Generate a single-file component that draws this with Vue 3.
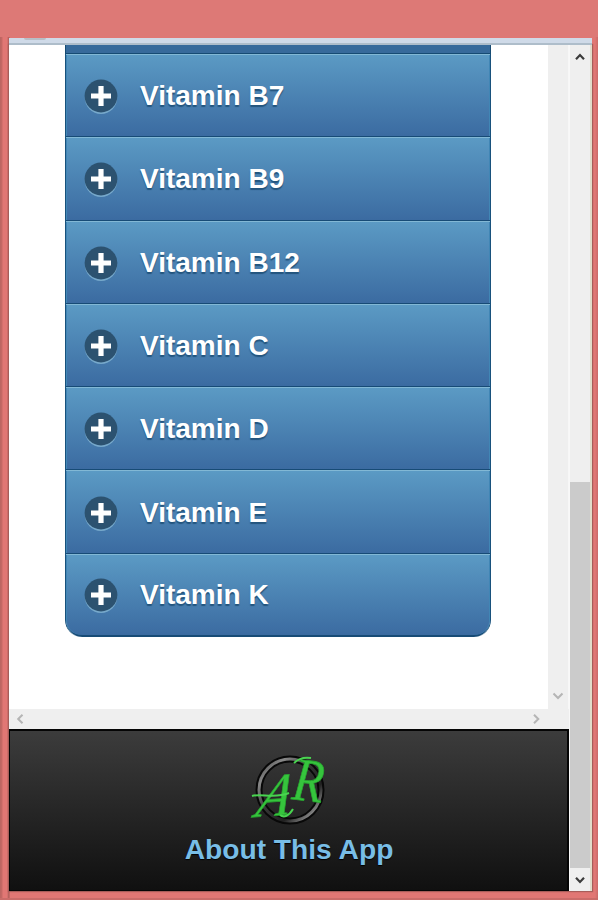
<template>
  <div class="frame">
    <div class="toolbar"><span class="toolbar-button"></span></div>
    <div class="window">
      <div class="page">
        <div class="viewport">
          <main class="content">
            <div class="previous-row"></div>
            <div class="vitamin-list">
              <div v-for="vitamin in vitamins" :key="vitamin" class="vitamin">
                <svg class="plus" viewBox="0 0 36 38">
                  <circle cx="18" cy="20.8" r="16.2" fill="#77a9cb" />
                  <circle cx="18" cy="19" r="16.4" fill="#2c5270" />
                  <path d="M18 9v20M8 19h20" stroke="#fff" stroke-width="5.2" />
                </svg>
                <span>{{ vitamin }}</span>
              </div>
            </div>
          </main>
          <div class="inner-vertical">
            <svg class="arrow muted" viewBox="0 0 12 10"><path d="M1.5 2.5 6 7l4.5-4.5" /></svg>
          </div>
        </div>
        <div class="inner-horizontal">
          <svg class="arrow muted" viewBox="0 0 12 10"><path d="M9.5.7 5.2 5l4.3 4.3" /></svg>
          <svg class="arrow muted" viewBox="0 0 12 10"><path d="M3 .7 7.3 5 3 9.3" /></svg>
        </div>
        <footer class="footer">
          <svg class="logo" viewBox="0 0 80 72">
            <defs>
              <linearGradient id="ring" x1="0" y1="0" x2="1" y2="1">
                <stop offset="0" stop-color="#333" />
                <stop offset=".2" stop-color="#888" />
                <stop offset=".45" stop-color="#363636" />
                <stop offset=".7" stop-color="#202020" />
                <stop offset=".88" stop-color="#8a8a8a" />
                <stop offset="1" stop-color="#181818" />
              </linearGradient>
            </defs>
            <circle cx="41" cy="36" r="31" class="ring-shadow" />
            <circle cx="41" cy="36" r="31" class="ring" />
            <g class="initials">
              <text transform="matrix(.86 -.06 -.3 1 5 63)" font-size="62">A</text>
              <text transform="matrix(.82 .1 -.12 1 42 45)" font-size="61">R</text>
            </g>
            <path d="M3 42c9-3 22 3 37-3" class="flourish" />
            <path d="M31 61c4 3 9 1 13-6" class="flourish" />
            <path d="M45 9c5-5 11-6 17-5" class="flourish" />
          </svg>
          <div class="about">About This App</div>
        </footer>
      </div>
      <div class="outer-scroll">
        <svg class="arrow" viewBox="0 0 12 10"><path d="M2 7.2 6 3l4 4.2" /></svg>
        <div class="thumb"></div>
        <svg class="arrow" viewBox="0 0 12 10"><path d="m2 2.8 4 4.2 4-4.2" /></svg>
      </div>
    </div>
  </div>
</template>

<script setup>
const vitamins = [
  'Vitamin B7',
  'Vitamin B9',
  'Vitamin B12',
  'Vitamin C',
  'Vitamin D',
  'Vitamin E',
  'Vitamin K',
]
</script>

<style>
body {
  margin: 0;
  overflow: hidden;
}
</style>

<style scoped>
.frame {
  box-sizing: border-box;
  width: 598px;
  height: 900px;
  padding: 38px 6px 8px 9px;
  background:
    linear-gradient(#dd7976, #dd7976) 0 0 / 100% 37px no-repeat,
    linear-gradient(90deg, #b96561 0, #c76965 2px, #e17774 3px, #e17774 7px, #a95b57 9px, #e17774 10px, #e17774 595px, #c96b68 598px);
  border-bottom: 2px solid #ca6c69;
  font-family: "Liberation Sans", Arial, sans-serif;
  font-weight: bold;
}

.toolbar {
  position: relative;
  z-index: 1;
  box-sizing: border-box;
  height: 7px;
  padding-left: 15px;
  background: #cfdae8;
  border-bottom: 2px solid #aebdca;
}

.toolbar-button {
  display: block;
  width: 22px;
  height: 2px;
  background: #b7bec6;
  border-radius: 0 0 12px 12px;
}

.window {
  display: flex;
  height: 846px;
  box-shadow: 0 0 1px 1px #a85d59;
}

.page {
  width: 560px;
}

.viewport {
  display: flex;
  height: 664px;
}

.content {
  box-sizing: border-box;
  width: 539px;
  padding: 0 57px 0 56px;
  background: #fff;
}

.previous-row {
  box-sizing: border-box;
  height: 9px;
  background: #376a9b;
  border: solid #164b73;
  border-width: 0 1px 1px;
}

.vitamin-list {
  box-sizing: border-box;
  display: grid;
  grid-template-rows: repeat(7, 1fr);
  height: 583px;
  overflow: hidden;
  border: solid #18517c;
  border-width: 0 1px;
  border-radius: 0 0 17px 17px;
}

.vitamin {
  display: flex;
  align-items: center;
  gap: 21px;
  padding: 1px 0 0 17px;
  color: #fff;
  font-size: 28px;
  line-height: 32px;
  text-shadow: 0 2px 1px #23557e;
  background: linear-gradient(#5b9ac4, #3b6ba1);
  border-top: 1px solid #82b8d5;
  border-bottom: 1px solid #174b76;
  box-shadow: inset 1px 0 #4186b5, inset -1px 0 #4186b5;
}

.vitamin:last-child {
  border-bottom-width: 2px;
  border-radius: 0 0 16px 16px;
}

.plus {
  width: 36px;
  height: 38px;
}

.inner-vertical {
  box-sizing: border-box;
  display: flex;
  width: 21px;
  align-items: flex-end;
  padding: 0 0 8px 4px;
  background: #efefef;
  border-right: 1px solid #f7f7f7;
}

.inner-horizontal {
  box-sizing: border-box;
  display: flex;
  justify-content: space-between;
  align-items: center;
  height: 20px;
  padding: 0 26px 0 4px;
  background: #efefef;
}

.arrow {
  width: 12px;
  height: 10px;
  fill: none;
  stroke: #3b3b3b;
  stroke-width: 2.2;
}

.arrow.muted {
  stroke: #b5b5b5;
  stroke-width: 2;
}

.footer {
  box-sizing: border-box;
  display: flex;
  flex-direction: column;
  align-items: center;
  height: 162px;
  padding-top: 23px;
  background: linear-gradient(#3c3c3c, #101010);
  border: solid #050505;
  border-width: 2px 2px 1px 1px;
}

.logo {
  width: 80px;
  height: 72px;
  overflow: visible;
}

.ring-shadow {
  fill: none;
  stroke: #080808;
  stroke-width: 7;
}

.ring {
  fill: none;
  stroke: url(#ring);
  stroke-width: 3;
}

.initials {
  font-family: "Liberation Serif", serif;
  font-style: italic;
  font-weight: normal;
  fill: #36c43d;
  stroke: #27a52f;
  stroke-width: 0.8;
}

.flourish {
  fill: none;
  stroke: #49d450;
  stroke-width: 2;
}

.about {
  margin-top: 7px;
  padding-left: 1px;
  color: #78bde6;
  font-size: 28.2px;
  line-height: 32px;
  text-shadow: 0 1px 1px #000;
}

.outer-scroll {
  box-sizing: border-box;
  display: flex;
  flex-direction: column;
  align-items: center;
  width: 23px;
  padding: 7px 0 6px;
  background: #efefef;
  border-left: 1px solid #f8f8f8;
  border-right: 2px solid #e1dcca;
}

.thumb {
  width: 100%;
  height: 386px;
  margin-top: auto;
  margin-bottom: 7px;
  background: #cbcbcb;
}
</style>
